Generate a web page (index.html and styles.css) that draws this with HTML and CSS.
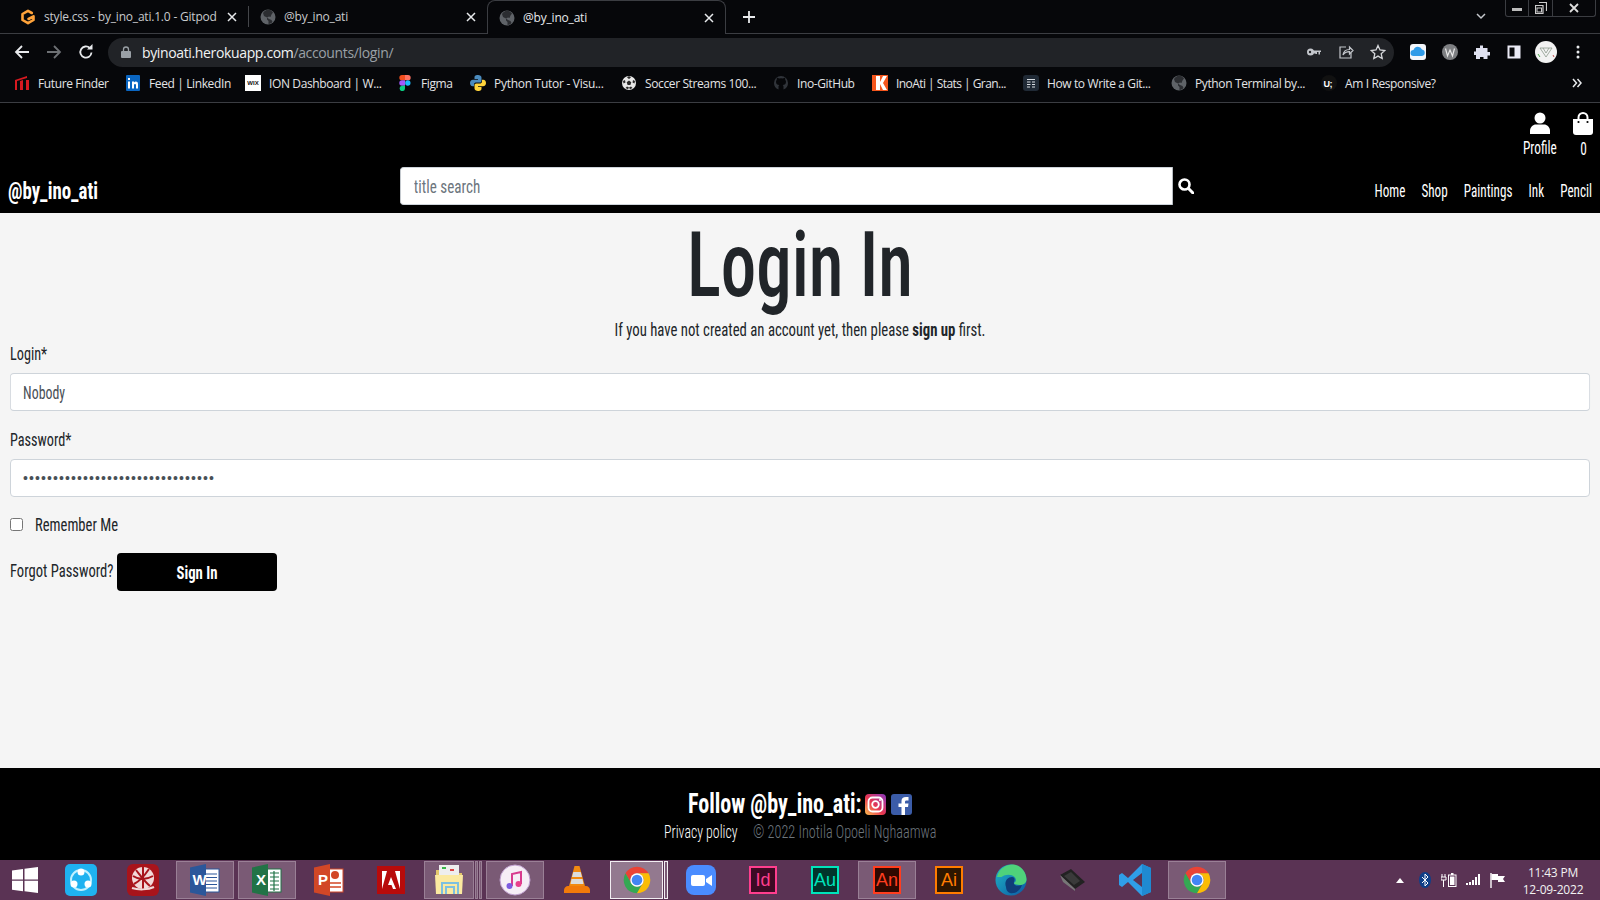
FILE: index.html
```html
<!DOCTYPE html>
<html lang="en">
<head>
<meta charset="utf-8">
<title>@by_ino_ati</title>
<link rel="stylesheet" href="styles.css">
</head>
<body>
<svg class="defs" width="0" height="0">
  <symbol id="globe" viewBox="0 0 16 16"><circle cx="8" cy="8" r="7.5" fill="#5f6368"/><path d="M8 .5c-2 .5-4 1.500-5 3.500l1 3 3 1.500v2l1.500 1.500V15c2-.2 3-1 4-2l-1-2-2.500-1-2-1.500 2-1 1.500.5 1-2.500L13 3.500C11.500 1.500 10 .7 8 .5Z" fill="#2b2d31"/></symbol>
  <symbol id="chrome" viewBox="0 0 24 24"><path d="M3.340 7A10 10 0 0 1 20.660 7H12A5 5 0 0 0 7.670 14.500Z" fill="#ea4335"/><path d="M12 22A10 10 0 0 1 3.340 7L7.670 14.500A5 5 0 0 0 16.330 14.500Z" fill="#34a853"/><path d="M20.660 7A10 10 0 0 1 12 22L16.330 14.500A5 5 0 0 0 12 7Z" fill="#fbbc05"/><circle cx="12" cy="12" r="5" fill="#fff"/><circle cx="12" cy="12" r="4" fill="#4285f4"/></symbol>
  <symbol id="close" viewBox="0 0 10 10"><path d="M1 1l8 8M9 1l-8 8" stroke="#e8eaed" stroke-width="1.500" fill="none"/></symbol>
  <linearGradient id="ig" x1="0" y1="1" x2="1" y2="0"><stop offset="0" stop-color="#fdc14f"/><stop offset=".45" stop-color="#e8364f"/><stop offset="1" stop-color="#8a3ac0"/></linearGradient>
  <linearGradient id="edgeg" x1="0" y1="0" x2="1" y2="1"><stop offset="0" stop-color="#1fb5c6"/><stop offset="1" stop-color="#0c59a4"/></linearGradient>
</svg>

<div class="browser">
  <div class="tabstrip">
    <div class="tab tab-first">
      <svg class="fav" viewBox="0 0 16 16"><path d="M11.800 4 8 1.800 2.500 5v6L8 14.200 13.500 11V7.300L8.500 10" fill="none" stroke="#ffa33a" stroke-width="2.600" stroke-linejoin="round" stroke-linecap="round"/></svg>
      <span class="tab-title">style.css - by_ino_ati.1.0 - Gitpod</span>
      <svg class="tab-x"><use href="#close"/></svg>
    </div>
    <div class="tab tab-sep">
      <svg class="fav"><use href="#globe"/></svg>
      <span class="tab-title">@by_ino_ati</span>
      <svg class="tab-x"><use href="#close"/></svg>
    </div>
    <div class="tab tab-active">
      <svg class="fav"><use href="#globe"/></svg>
      <span class="tab-title">@by_ino_ati</span>
      <svg class="tab-x"><use href="#close"/></svg>
    </div>
    <div class="newtab"><svg viewBox="0 0 14 14" width="14" height="14"><path d="M7 1v12M1 7h12" stroke="#e8eaed" stroke-width="1.800"/></svg></div>
    <div class="chev"><svg viewBox="0 0 12 12" width="12" height="12"><path d="M2 4l4 4 4-4" stroke="#c4c7cc" stroke-width="1.500" fill="none"/></svg></div>
    <div class="winctl">
      <span class="wc wc-min"><svg viewBox="0 0 10 10" width="10" height="10"><rect x="0" y="5" width="10" height="3" fill="#bbb"/></svg></span>
      <span class="wc wc-res"><svg viewBox="0 0 12 12" width="12" height="12"><path d="M4 .5h7.500V9M.5 3.500h7.500v8H.5Z" fill="none" stroke="#ccc" stroke-width="1.200"/><rect x="2" y="6" width="4.500" height="4" fill="none" stroke="#ccc"/></svg></span>
      <span class="wc wc-x"><svg viewBox="0 0 10 10" width="10" height="10"><path d="M1 1l8 8M9 1l-8 8" stroke="#ddd" stroke-width="1.800"/></svg></span>
    </div>
  </div>

  <div class="toolbar">
    <svg class="tb" viewBox="0 0 16 16"><path d="M15 8H2M8 2 2 8l6 6" stroke="#e8eaed" stroke-width="1.800" fill="none"/></svg>
    <svg class="tb" viewBox="0 0 16 16"><path d="M1 8h13M8 2l6 6-6 6" stroke="#6d7074" stroke-width="1.800" fill="none"/></svg>
    <svg class="tb tb-rel" viewBox="0 0 16 16"><path d="M13.500 8.500A5.600 5.600 0 1 1 11.800 4" stroke="#e8eaed" stroke-width="1.800" fill="none"/><path d="M9 5.500h5.500V0Z" fill="#e8eaed"/></svg>
    <div class="omnibox">
      <svg class="lock" viewBox="0 0 10 12" width="10" height="12"><rect x="0" y="5" width="10" height="7" rx="1" fill="#9aa0a6"/><path d="M2.500 5V3.500a2.500 2.500 0 0 1 5 0V5" stroke="#9aa0a6" stroke-width="1.300" fill="none"/></svg>
      <span class="url"><b>byinoati.herokuapp.com</b>/accounts/login/</span>
      <svg class="om-ic om-key" viewBox="0 0 16 16"><circle cx="4.500" cy="8" r="3.500" fill="#c4c7cc"/><path d="M7 6.500h8V8h-1v2.500h-1.500V8H11v2H9.500V9.500H7Z" fill="#c4c7cc"/><circle cx="4" cy="8" r="1.200" fill="#212327"/></svg>
      <svg class="om-ic" viewBox="0 0 16 16"><path d="M8 3H2v11h11V9" stroke="#c4c7cc" stroke-width="1.200" fill="none"/><path d="M5 11c.5-4 3-5.500 6.500-5.500V3L15 6.500 11.500 10V7.700C9 7.700 6.500 8.500 5 11Z" stroke="#c4c7cc" stroke-width="1.200" fill="none"/></svg>
      <svg class="om-ic" viewBox="0 0 16 16"><path d="M8 1.500l2 4.500 4.800.5-3.600 3.200 1 4.800L8 12.100l-4.200 2.400 1-4.800L1.200 6.500 6 6Z" stroke="#d5d7da" stroke-width="1.300" fill="none"/></svg>
    </div>
    <div class="tools">
      <svg class="tool" viewBox="0 0 16 16"><rect width="16" height="16" rx="3" fill="#f2f6fb"/><path d="M3.500 12a3 3 0 0 1 0-6 4.500 4.500 0 0 1 8.500-.5A3.300 3.300 0 0 1 12 12Z" fill="#2f9be8"/></svg>
      <svg class="tool" viewBox="0 0 16 16"><circle cx="8" cy="8" r="8" fill="#7d7f82"/><path d="M3.500 4.500 5.500 12 8 6l2.500 6 2-7.500" stroke="#e8e8e8" stroke-width="1.200" fill="none"/></svg>
      <svg class="tool" viewBox="0 0 16 16"><path d="M6 1.500h3V4h4.500v4H16v3.500h-2.500V15H9.500v-2H6v2H2v-4H0V7.500h2V4h4Z" fill="#dfe1f0"/></svg>
      <svg class="tool" viewBox="0 0 16 16"><rect x="1.500" y="1.500" width="13" height="13" fill="#eaeaf5"/><rect x="3.500" y="3.500" width="5" height="9" fill="#08090c"/></svg>
      <svg class="tool tool-av" viewBox="0 0 22 22"><circle cx="11" cy="11" r="11" fill="#f2f2f2"/><path d="M5 7l6 9 6-9M8 7l3 5 3-5M5 7h12" stroke="#8d9a8d" stroke-width=".8" fill="none"/><path d="M3 13l2 3" stroke="#4caf50"/><path d="M18 14l1 2" stroke="#c05050"/></svg>
      <svg class="tool" viewBox="0 0 16 16"><circle cx="8" cy="3" r="1.500" fill="#e8eaed"/><circle cx="8" cy="8" r="1.500" fill="#e8eaed"/><circle cx="8" cy="13" r="1.500" fill="#e8eaed"/></svg>
    </div>
  </div>

  <div class="bookmarks">
    <div class="bm"><svg class="fav" viewBox="0 0 16 16"><path d="M1 5 13 1v2L3 6v9H1ZM6 6l3-1v10H6ZM12 5h3v10h-3Z" fill="#d71920"/></svg><span>Future Finder</span></div>
    <div class="bm"><svg class="fav" viewBox="0 0 16 16"><rect x="1" width="14" height="16" rx="1" fill="#0a66c2"/><rect x="3" y="6.500" width="2" height="7" fill="#fff"/><rect x="3" y="3" width="2" height="2" fill="#fff"/><path d="M7 6.500h2v1c1-1.500 4-1.500 4 1.500v4.500h-2V10c0-1.500-2-1.500-2 0v3.500H7Z" fill="#fff"/></svg><span>Feed | LinkedIn</span></div>
    <div class="bm"><span class="wix">WIX</span><span>ION Dashboard | W...</span></div>
    <div class="bm"><svg class="fav" viewBox="0 0 16 16"><path d="M5 0h3v5.300H5A2.600 2.600 0 0 1 5 0Z" fill="#f24e1e"/><path d="M8 0h3a2.600 2.600 0 0 1 0 5.300H8Z" fill="#ff7262"/><path d="M5 5.300h3v5.400H5a2.700 2.700 0 0 1 0-5.400Z" fill="#a259ff"/><circle cx="10.800" cy="8" r="2.700" fill="#1abcfe"/><path d="M5 10.700h3v2.700a2.700 2.700 0 1 1-3-2.700Z" fill="#0acf83"/></svg><span>Figma</span></div>
    <div class="bm"><svg class="fav" viewBox="0 0 16 16"><path d="M8 0C5 0 4.500 1.200 4.500 2.500V4H8v.8H3C1 4.800 0 6.300 0 8s1 3.200 2.700 3.200H4V9.500C4 8 5.200 7.500 6.300 7.500h3.400c1.200 0 1.800-.8 1.800-1.800v-3C11.500.8 10 0 8 0Z" fill="#4b8bbe"/><path d="M8 16c3 0 3.500-1.200 3.500-2.500V12H8v-.8h5c2 0 3-1.500 3-3.200s-1-3.200-2.700-3.200H12v1.700c0 1.500-1.200 2-2.300 2H6.300c-1.200 0-1.800.8-1.800 1.800v3C4.500 15.200 6 16 8 16Z" fill="#ffd43b"/></svg><span class="bm-wide">Python Tutor - Visu...</span></div>
    <div class="bm"><svg class="fav" viewBox="0 0 16 16"><circle cx="8" cy="8" r="7" fill="#e8e8e8"/><path d="M8 5.500l2.300 1.700-.9 2.700H6.600l-.9-2.700ZM8 1l2 1.500L8 4 6 2.500ZM14 6l-.5 2.500-2-1 .5-2.500ZM2 6l.5 2.500 2-1L4 5ZM4.500 13l1.500-1.500 2 1-1 1.800ZM11.500 13 10 11.500l-2 1 1 1.800Z" fill="#2a2a2a"/></svg><span>Soccer Streams 100...</span></div>
    <div class="bm"><svg class="fav" viewBox="0 0 16 16"><path d="M5.500 14.500C2.500 13.500 1 11 1 8a7 7 0 0 1 14 0c0 3-1.500 5.500-4.500 6.500v-2.500c0-1-.3-1.500-.8-2 2-.2 3.300-1 3.300-3.300 0-.8-.3-1.500-.8-2 .1-.5.1-1.300-.2-2-.8 0-1.500.4-2 .8a7 7 0 0 0-4 0c-.5-.4-1.200-.8-2-.8-.3.700-.3 1.500-.2 2-.5.5-.8 1.200-.8 2 0 2.300 1.300 3.100 3.300 3.300-.5.500-.8 1-.8 2Z" fill="#30343a"/></svg><span>Ino-GitHub</span></div>
    <div class="bm"><svg class="fav" viewBox="0 0 16 16"><rect width="16" height="16" fill="#f4561d"/><path d="M4 1h4v6l3-6h4l-4 7 4 7h-4L8 9v6H4Z" fill="#fff"/></svg><span class="bm-tight">InoAti | Stats | Gran...</span></div>
    <div class="bm"><svg class="fav" viewBox="0 0 16 16"><rect width="16" height="16" rx="3" fill="#202a36"/><path d="M4 4.500h8M4 7h3.500M9 7h3M4 9.500h3.500M9 9.500h3M4 12h3M9 12h3" stroke="#d8dde2" stroke-width="1"/></svg><span>How to Write a Git...</span></div>
    <div class="bm"><svg class="fav"><use href="#globe"/></svg><span>Python Terminal by...</span></div>
    <div class="bm"><svg class="fav" viewBox="0 0 16 16"><circle cx="8" cy="8" r="8" fill="#111"/><text x="2.500" y="12" class="ufav">U;</text></svg><span>Am I Responsive?</span></div>
    <div class="bm-more"><svg viewBox="0 0 10 10" width="10" height="10"><path d="M1 1l3.500 4L1 9M5.500 1 9 5 5.500 9" stroke="#e8eaed" stroke-width="1.500" fill="none"/></svg></div>
  </div>
</div>

<header class="site-head">
  <div class="head-top">
    <a class="head-ic head-profile">
      <svg viewBox="0 0 20 22" width="20" height="22"><circle cx="10" cy="6" r="5.500" fill="#fff"/><path d="M0 22v-3c0-4 3-6.500 6-6.500h8c3 0 6 2.500 6 6.500v3Z" fill="#fff"/></svg>
      <span>Profile</span>
    </a>
    <a class="head-ic head-bag">
      <svg viewBox="0 0 20 23" width="20" height="23"><path d="M0 7h20v13a3 3 0 0 1-3 3H3a3 3 0 0 1-3-3Z" fill="#fff"/><path d="M5.500 9V5.500a4.500 4.500 0 0 1 9 0V9" stroke="#fff" stroke-width="2" fill="none"/><circle cx="5.500" cy="10" r="1.100" fill="#000"/><circle cx="14.500" cy="10" r="1.100" fill="#000"/></svg>
      <span>0</span>
    </a>
  </div>
  <div class="head-main">
    <div><a class="logo">@by_ino_ati</a></div>
    <form class="search">
      <input class="search-in" type="text" placeholder="title search">
      <svg class="search-ic" viewBox="0 0 16 16" width="16" height="16"><circle cx="6.500" cy="6.500" r="5" stroke="#fff" stroke-width="2.600" fill="none"/><path d="M10.500 10.500 15 15" stroke="#fff" stroke-width="3" stroke-linecap="round"/></svg>
    </form>
    <nav class="nav"><a>Home</a><a>Shop</a><a>Paintings</a><a>Ink</a><a>Pencil</a></nav>
  </div>
</header>

<main class="page">
  <h1 class="title">Login In</h1>
  <p class="lede">If you have not created an account yet, then please <b>sign up</b> first.</p>
  <form class="login">
    <label class="lab">Login*</label>
    <input class="field" type="text" value="Nobody">
    <label class="lab lab-2">Password*</label>
    <input class="field-pw" type="password" value="aaaaaaaaaaaaaaaaaaaaaaaaaaaaaaaa">
    <div class="remember"><input class="check" type="checkbox"><span class="remember-t">Remember Me</span></div>
    <div class="actions"><a class="forgot">Forgot Password?</a><button class="signin" type="button"><span>Sign In</span></button></div>
  </form>
</main>

<footer class="site-foot">
  <div class="follow"><span class="follow-t">Follow @by_ino_ati:</span>
    <svg viewBox="0 0 21 21" width="21" height="21"><rect width="21" height="21" rx="4" fill="url(#ig)"/><rect x="3.500" y="3.500" width="14" height="14" rx="4" fill="none" stroke="#fff" stroke-width="1.800"/><circle cx="10.500" cy="10.500" r="3.300" fill="none" stroke="#fff" stroke-width="1.800"/><circle cx="15" cy="6" r="1" fill="#fff"/></svg>
    <svg viewBox="0 0 21 21" width="21" height="21"><rect width="21" height="21" rx="3" fill="#3b5ca8"/><path d="M10.500 21v-8H7.500V9.500H10.500V7C10.500 4.500 12 3 15 3h2.500v3.500H15.500c-1 0-1.500.5-1.500 1.500v1.500h3.500L17 13H14v8Z" fill="#fff"/></svg>
  </div>
  <div class="legal"><a class="privacy">Privacy policy</a><span class="copy">© 2022 Inotila Opoeli Nghaamwa</span></div>
</footer>

<div class="taskbar">
  <div class="start"><svg viewBox="0 0 26 26" width="26" height="26"><path d="M0 3.500 11 2v10.500H0ZM12.500 1.800 26 0v12.500H12.500ZM0 13.800h11v10.500L0 22.800ZM12.500 13.800H26V26l-13.500-1.800Z" fill="#fff"/></svg></div>
  <div class="task"><svg class="ti" viewBox="0 0 32 32"><rect width="32" height="32" rx="5" fill="#1fb2f0"/><circle cx="16" cy="16" r="10" fill="none" stroke="#bff0ff" stroke-width="2"/><circle cx="16" cy="8" r="3.500" fill="#fff"/><circle cx="9" cy="20" r="3.500" fill="#fff"/><circle cx="23" cy="20" r="3.500" fill="#fff"/></svg></div>
  <div class="task"><svg class="ti" viewBox="0 0 32 32"><rect width="32" height="32" rx="6" fill="#a8141b"/><circle cx="16" cy="14" r="11" fill="#f2d9d9"/><path d="M6 12c6 4 13 4 20 0M9 6c4 5 9 12 14 16M22 5c-4 6-9 12-15 15M16 3v22" stroke="#a8141b" stroke-width="2" fill="none"/><path d="M5 24c6 2 16 2 22-1" stroke="#f2d9d9" stroke-width="2" fill="none"/></svg></div>
  <div class="task task-on"><svg class="ti" viewBox="0 0 32 32"><rect x="12" y="5" width="18" height="23" fill="#fff" stroke="#2b579a"/><path d="M17 10h11M17 13.500h11M17 17h11M17 20.500h11M17 24h11" stroke="#2b579a" stroke-width="1.200"/><path d="M1 3.500 17 0v32L1 28.500Z" fill="#2b579a"/><text x="3.500" y="21" class="doc">W</text></svg></div>
  <div class="task task-on"><svg class="ti" viewBox="0 0 32 32"><rect x="12" y="5" width="18" height="23" fill="#fff" stroke="#217346"/><path d="M19 9h9M19 13h9M19 17h9M19 21h9M19 25h9M23 7v20" stroke="#217346" stroke-width="1.200"/><path d="M1 3.500 17 0v32L1 28.500Z" fill="#217346"/><text x="5" y="21" class="doc">X</text></svg></div>
  <div class="task"><svg class="ti" viewBox="0 0 32 32"><rect x="12" y="5" width="18" height="23" fill="#fff" stroke="#d24726"/><circle cx="22" cy="11" r="4" fill="#d24726"/><path d="M17 19h11M17 23h11" stroke="#d24726" stroke-width="1.400"/><path d="M1 3.500 17 0v32L1 28.500Z" fill="#d24726"/><text x="5" y="21" class="doc">P</text></svg></div>
  <div class="task"><svg class="ti ti-acro" viewBox="0 0 28 28"><rect width="28" height="28" fill="#b80b0b"/><path d="M10 5H5v18ZM18 5h5v18ZM14 11l5 12h-3l-1.500-4H11Z" fill="#fff"/></svg></div>
  <div class="task task-stack task-files"><div class="task-main"><svg class="ti" viewBox="0 0 32 32"><path d="M3 6h10l3 3h13v21H3Z" fill="#e3c86b"/><rect x="6" y="1" width="20" height="10" fill="#eee"/><rect x="9" y="3" width="4" height="2" fill="#3ab54a"/><rect x="17" y="5" width="4" height="2" fill="#d44"/><path d="M2 11h28l-1 19H3Z" fill="#fbe9a0"/><path d="M9 30V19h16v11M13 30v-7h8v7" stroke="#7cc0e0" stroke-width="2" fill="none"/></svg></div><span class="stack-e"></span><span class="stack-e"></span></div>
  <div class="task task-on"><svg class="ti" viewBox="0 0 32 32"><circle cx="16" cy="16" r="15" fill="#f6eef6" stroke="#c0a0d0"/><path d="M13 22V10l9-2v12" stroke="#d83a8e" stroke-width="2" fill="none"/><circle cx="10.500" cy="22" r="3" fill="#7d5be0"/><circle cx="19.500" cy="20" r="3" fill="#e8408c"/></svg></div>
  <div class="task"><svg class="ti" viewBox="0 0 32 32"><path d="M13.500 2h5l6 22h-17Z" fill="#f28a10"/><path d="M12.300 8h7.400l1.300 5H11ZM10.500 15h11l1 5h-13Z" fill="#dcdcdc"/><path d="M3 26c0-2 2-4 4-4h18c2 0 4 2 4 4v3H3Z" fill="#f27a0a"/></svg></div>
  <div class="task task-stack task-act"><div class="task-main"><svg class="ti"><use href="#chrome"/></svg></div><span class="stack-e"></span></div>
  <div class="task"><svg class="ti" viewBox="0 0 32 32"><rect x="1" y="1" width="30" height="30" rx="8" fill="#4a8cff"/><rect x="6" y="11" width="14" height="11" rx="2" fill="#fff"/><path d="M21 15l6-4v11l-6-4Z" fill="#fff"/></svg></div>
  <div class="task"><span class="ado ado-id">Id</span></div>
  <div class="task"><span class="ado ado-au">Au</span></div>
  <div class="task task-on"><span class="ado ado-an">An</span></div>
  <div class="task"><span class="ado ado-ai">Ai</span></div>
  <div class="task"><svg class="ti" viewBox="0 0 32 32"><circle cx="16" cy="16" r="15.500" fill="url(#edgeg)"/><path d="M2 13C4 4 12 .5 17 .5 25 .5 31 7 31.500 15c.3 4-3 6-7 6-3 0-5.500-1-6-2 3-1 3-4 1-6-3-3-9-3-13 0Z" fill="#4fd27a"/><path d="M11 23c-2-5 1-10 6-10 3 0 3 3 2 5-1 3 3 5 8 3-2 6-7 9-12 8-2-.5-4-3-4-6Z" fill="#0f3d7a"/></svg></div>
  <div class="task"><svg class="ti" viewBox="0 0 32 32"><path d="M3 11 14 5l14 13-10 7Z" fill="#222"/><path d="M3 11l3 7 12 9v-2Z" fill="#777"/><path d="M7 12 14 8l9 9-6 4Z" fill="#3a3a3a"/></svg></div>
  <div class="task"><svg class="ti" viewBox="0 0 32 32"><path d="M23 0 32 4v24l-9 4L9 18l-6 5-3-2v-10l3-2 6 5Z" fill="#2f9ee8"/><path d="M23 0v32l9-4V4Z" fill="#1f8ad2"/><path d="M23 9v14l-9-7Z" fill="#5a3354"/></svg></div>
  <div class="task task-on"><svg class="ti"><use href="#chrome"/></svg></div>
  <div class="tray">
    <span class="tray-i"><svg viewBox="0 0 8 5" width="8" height="5"><path d="M0 5l4-5 4 5Z" fill="#fff"/></svg></span>
    <span class="tray-i"><svg viewBox="0 0 12 16" width="12" height="16"><ellipse cx="6" cy="8" rx="6" ry="8" fill="#0f3f88"/><path d="M3 5l6 6-3 3V2l3 3-6 6" stroke="#fff" stroke-width="1" fill="none"/></svg></span>
    <span class="tray-i"><svg viewBox="0 0 16 14" width="16" height="14"><path d="M1 1v3M4 1v3M0 4h5v3H0ZM2.500 7v7" stroke="#fff" fill="none"/><rect x="7.500" y="2" width="7.500" height="11.500" fill="none" stroke="#fff"/><rect x="9" y="3.500" width="4.500" height="8.500" fill="#fff"/><rect x="10" y="0" width="2.500" height="2" fill="#fff"/></svg></span>
    <span class="tray-i"><svg viewBox="0 0 16 12" width="16" height="12"><rect y="9" width="2" height="2" fill="#fff"/><rect x="3" y="8" width="2" height="3" fill="#fff"/><rect x="6" y="6" width="2" height="5" fill="#fff"/><rect x="9" y="3" width="2" height="8" fill="#fff"/><rect x="12" y="0" width="2" height="11" fill="#fff"/></svg></span>
    <span class="tray-i"><svg viewBox="0 0 16 15" width="16" height="15"><path d="M1 0v15" stroke="#fff" stroke-width="1.400"/><path d="M1.500 1H8v2h7l-2 3 2 3H8V7H1.500Z" fill="#fff"/></svg></span>
    <div class="clock"><div>11:43 PM</div><div>12-09-2022</div></div>
  </div>
</div>
</body>
</html>
```
FILE: styles.css
```css
* { box-sizing: border-box; }
html, body { margin: 0; height: 100%; }
body { width: 1600px; height: 900px; overflow: hidden; display: flex; flex-direction: column; background: #f5f5f5; font-family: "Liberation Sans Narrow", "Roboto Condensed", "Open Sans Condensed", "Liberation Sans", sans-serif; }
.defs { position: absolute; }
svg { display: block; flex: none; }

.browser { background: #06070a; color: #e8eaed; font-family: "Open Sans", "Noto Sans", sans-serif; font-size: 12px; height: 103px; flex: none; }
.tabstrip { height: 34px; display: flex; align-items: stretch; padding-left: 9px; border-bottom: 1px solid #3b3d42; position: relative; }
.tab { width: 239px; display: flex; align-items: center; padding: 0 9px 0 11px; gap: 8px; }
.tab-sep { border-left: 1px solid #44464a; margin: 6px 0; }
.tab-active { border: 1px solid #3b3d42; border-bottom: 0; border-radius: 8px 8px 0 0; height: 34px; background: #06070a; }
.tab-title { flex: 1; white-space: nowrap; overflow: hidden; color: #c8cacd; letter-spacing: -.2px; }
.tab-active .tab-title { color: #e8eaed; }
.fav { width: 16px; height: 16px; }
.tab-x { width: 10px; height: 10px; margin-right: 2px; }
.newtab { width: 46px; display: flex; align-items: center; justify-content: center; }
.chev { position: absolute; left: 1475px; top: 10px; }
.winctl { position: absolute; left: 1505px; top: 0; width: 91px; height: 17px; display: flex; border: 1px solid #3b3d42; border-top: 0; border-radius: 0 0 3px 3px; }
.wc { display: flex; align-items: center; justify-content: center; }
.wc-min { width: 22px; }
.wc-res { width: 25px; border-left: 1px solid #3b3d42; border-right: 1px solid #3b3d42; }
.wc-x { flex: 1; }

.toolbar { height: 36px; display: flex; align-items: center; padding-left: 14px; }
.tb { width: 16px; height: 16px; margin-right: 16px; }
.tb-rel { margin-right: 14px; }
.omnibox { width: 1286px; height: 29px; border-radius: 15px; background: #212327; display: flex; align-items: center; padding-left: 13px; }
.lock { margin-right: 11px; }
.url { flex: 1; font-size: 14px; color: #9aa0a6; letter-spacing: -.36px; }
.url b { font-weight: 400; color: #f1f3f4; }
.om-ic { width: 16px; height: 16px; margin-right: 16px; }
.om-ic:last-child { margin-right: 8px; }
.tools { display: flex; align-items: center; gap: 16px; margin-left: 16px; }
.tool { width: 16px; height: 16px; }
.tool-av { width: 22px; height: 22px; margin: 0 -3px; }

.bookmarks { height: 33px; display: grid; grid-template-columns: 111px 120px 152px 73px 151px 152px 99px 151px 148px 150px 251px 1fr; align-items: center; padding: 0 0 6px 14px; border-bottom: 1px solid #3b3d42; }
.bm { display: flex; align-items: center; gap: 8px; white-space: nowrap; color: #e3e4e6; letter-spacing: -.38px; }
.bm-wide { letter-spacing: -.28px; }
.bm-tight { letter-spacing: -.55px; }
.wix { width: 16px; height: 16px; background: #fff; color: #111; font: 700 6px/16px "Liberation Sans", sans-serif; text-align: center; letter-spacing: 0; }
.ufav { font: 700 9px "Liberation Sans", sans-serif; fill: #fff; }
.bm-more { display: flex; }

.site-head { background: #000; color: #fff; height: 110px; flex: none; display: flex; flex-direction: column; justify-content: space-between; }
.head-top { display: flex; justify-content: flex-end; padding: 9px 7px 0 0; gap: 16px; height: 59px; }
.head-ic { display: flex; flex-direction: column; align-items: center; font-size: 18px; line-height: 24px; gap: 2px; white-space: nowrap; }
.head-ic span { transform: scaleX(.74); }
.head-profile { width: 34px; }
.head-bag { width: 20px; }
.head-main { display: grid; grid-template-columns: 392px 793px 1fr; padding: 0 8px; height: 51px; }
.logo { display: block; font-size: 23px; font-weight: 700; line-height: 28px; margin-top: 16px; transform: scaleX(.82); transform-origin: left; white-space: nowrap; }
.search { display: flex; align-items: flex-start; gap: 5px; }
.search-in { width: 920px; margin: 5px -147px 0 0; height: 38px; padding: 0 15.500px; border: 1px solid #ced4da; border-radius: 4.800px 0 0 4.800px / 4px 0 0 4px; font: inherit; font-size: 18px; background: #fff; transform: scaleX(.84); transform-origin: left; flex: none; }
.search-in::placeholder { color: #6c757d; }
.search-ic { margin-top: 16px; }
.nav { display: flex; justify-content: flex-end; gap: 21.500px; font-size: 17.500px; line-height: 24px; margin-top: 17px; transform: scaleX(.75); transform-origin: right; white-space: nowrap; }

.page { flex: 1; padding: 0 10px; color: #212529; min-height: 0; }
.title { margin: 4px 0 0; height: 96px; text-align: center; font-size: 91px; line-height: 96px; font-weight: 500; transform: scaleX(.78); white-space: nowrap; }
.lede { margin: 5px 0 0; text-align: center; font-size: 18px; line-height: 24px; transform: scaleX(.82); }
.lede b { font-weight: 700; }
.login { display: flex; flex-direction: column; }
.lab { font-size: 18px; line-height: 24px; height: 31px; transform: scaleX(.79); transform-origin: left; }
.lab-2 { margin-top: 17px; }
.field { width: calc(100% / .77); height: 38px; padding: 0 16px; border: 1px solid #ced4da; border-radius: 5.200px / 4px; background: #fff; color: #495057; font: inherit; font-size: 18px; transform: scaleX(.77); transform-origin: left; }
.field-pw { width: 100%; height: 38px; padding: 0 12px; border: 1px solid #ced4da; border-radius: 4px; background: #fff; color: #495057; font-size: 14px; letter-spacing: 1.100px; font-family: "Liberation Sans", sans-serif; }
.remember { display: flex; align-items: center; gap: 12px; margin-top: 15px; height: 24px; font-size: 18px; }
.remember-t { transform: scaleX(.81); transform-origin: left; }
.check { width: 13px; height: 13px; margin: 0; }
.actions { display: flex; align-items: center; gap: 4px; margin-top: 17px; font-size: 18px; }
.forgot { width: 103px; white-space: nowrap; transform: scaleX(.81); transform-origin: left; margin-top: -3px; }
.signin { width: 160px; height: 38px; background: #000; color: #fff; border: 0; border-radius: 4px; font: inherit; font-size: 18px; font-weight: 700; }
.signin span { display: inline-block; transform: scaleX(.82); }

.site-foot { background: #000; color: #fff; height: 92px; flex: none; display: flex; flex-direction: column; align-items: center; padding-top: 22px; }
.follow { display: flex; align-items: center; gap: 5px; font-size: 28px; font-weight: 700; line-height: 28px; }
.follow-t { width: 172px; white-space: nowrap; transform: scaleX(.787); transform-origin: left; }
.legal { display: flex; gap: 16px; margin-top: 2px; font-size: 18px; line-height: 24px; font-weight: 300; white-space: nowrap; }
.privacy { width: 73px; transform: scaleX(.77); transform-origin: left; }
.copy { width: 183px; color: #6c757d; transform: scaleX(.79); transform-origin: left; }

.taskbar { height: 40px; flex: none; background: #5a3354; display: flex; gap: 4px; padding: 1px 0; }
.start { width: 48px; display: flex; align-items: center; justify-content: center; padding-left: 2px; }
.task { width: 58px; display: flex; align-items: center; justify-content: center; border: 1px solid transparent; }
.task-on { background: #7a5a75; border-color: #9a8096; }
.task-stack { padding: 0; border: 0; justify-content: flex-start; }
.task-main { flex: 1; height: 100%; display: flex; align-items: center; justify-content: center; background: #7a5a75; border: 1px solid #9a8096; }
.stack-e { width: 4px; height: 100%; margin-left: 1px; border: 1px solid #9a8096; background: #7a5a75; flex: none; }
.task-files .stack-e { width: 3px; }
.task-act .task-main { background: #93798f; border-color: #f2eef2; }
.task-act .stack-e { border-color: #f2eef2; }
.ti { width: 32px; height: 32px; }
.ti-acro { width: 28px; height: 28px; }
.doc { font: 700 15px "Liberation Sans", sans-serif; fill: #fff; }
.ado { width: 28px; height: 28px; border: 2px solid; font: 400 18px/24px "Liberation Sans Narrow", "Liberation Sans", sans-serif; text-align: center; }
.ado-id { color: #ff3e8e; border-color: #ff3e8e; background: #3d0a24; }
.ado-au { color: #00e4bb; border-color: #00e4bb; background: #00342b; }
.ado-an { color: #ff3d1f; border-color: #ff3d1f; background: #2f0800; }
.ado-ai { color: #ff7c00; border-color: #ff7c00; background: #2d1600; }
.tray { flex: 1; display: flex; align-items: center; padding-left: 158px; position: relative; font-family: "Open Sans", sans-serif; color: #f2f2f2; }
.tray-i { width: 24.500px; display: flex; justify-content: center; }
.clock { position: absolute; right: 2px; top: 3px; width: 90px; text-align: center; font-size: 12px; line-height: 17px; letter-spacing: -.2px; }
```
